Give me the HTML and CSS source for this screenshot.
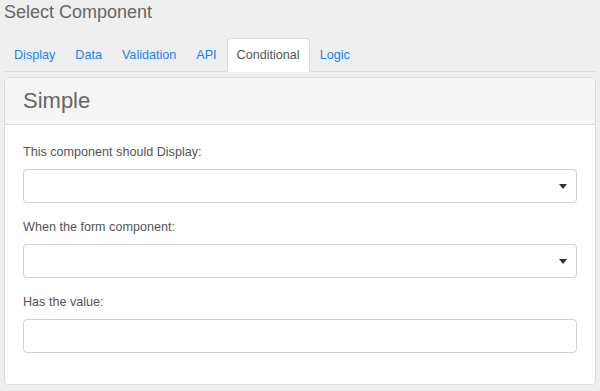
FILE: index.html
```html
<!DOCTYPE html>
<html lang="en">
<head>
  <meta charset="UTF-8">
  <meta name="viewport" content="width=device-width, initial-scale=1.0">
  <title>Select Component</title>
  <link rel="stylesheet" href="styles.css">
</head>
<body>
  <div class="container">
    <h4 class="title">Select Component</h4>

    <ul class="tabs">
      <li class="tab"><a href="#">Display</a></li>
      <li class="tab"><a href="#">Data</a></li>
      <li class="tab"><a href="#">Validation</a></li>
      <li class="tab"><a href="#">API</a></li>
      <li class="tab active"><a href="#">Conditional</a></li>
      <li class="tab"><a href="#">Logic</a></li>
    </ul>

    <div class="card">
      <div class="cardHeader">Simple</div>
      <div class="cardBody">
        <div class="formGroup">
          <label class="label">This component should Display:</label>
          <div class="select"><span class="caret"></span></div>
        </div>
        <div class="formGroup">
          <label class="label">When the form component:</label>
          <div class="select"><span class="caret"></span></div>
        </div>
        <div class="formGroup">
          <label class="label">Has the value:</label>
          <input type="text" class="input">
        </div>
      </div>
    </div>
  </div>
</body>
</html>
```

FILE: styles.css
```css
* {
  box-sizing: border-box;
}

body {
  margin: 0;
  background-color: #efefef;
  font-family: "Liberation Sans", Arial, sans-serif;
  font-size: 12.6px;
  color: #555;
}

.container {
  padding: 2px 4px 0 4px;
}

.title {
  margin: 0 0 16px;
  font-size: 18px;
  font-weight: normal;
  line-height: 20px;
  color: #666;
}

.tabs {
  display: flex;
  list-style: none;
  margin: 0 0 5px;
  padding: 0;
  border-bottom: 1px solid #dcdcdc;
}
.tab {
  margin-bottom: -1px;
}
.tab a {
  display: block;
  padding: 7px 9px;
  line-height: 18px;
  border: 1px solid transparent;
  border-radius: 4px 4px 0 0;
  color: #1683f8;
  text-decoration: none;
}
.tab.active a {
  background-color: #fff;
  border-color: #dcdcdc #dcdcdc #fff;
  color: #555;
}

.card {
  background-color: #fff;
  border: 1px solid #dcdcdc;
  border-radius: 4px;
}
.cardHeader {
  padding: 10px 18px;
  font-size: 22px;
  line-height: 26px;
  color: #666;
  background-color: #f5f5f5;
  border-bottom: 1px solid #dcdcdc;
  border-radius: 4px 4px 0 0;
}
.cardBody {
  padding: 18px 18px 16px;
}

.formGroup {
  margin-bottom: 15px;
}
.label {
  display: block;
  margin-bottom: 8px;
  line-height: 18px;
  color: #555;
}
.select,
.input {
  display: flex;
  align-items: center;
  justify-content: flex-end;
  width: 100%;
  height: 34px;
  padding: 0 9px;
  background-color: #fff;
  border: 1px solid #ccd2d8;
  border-radius: 4px;
  font-family: inherit;
  font-size: 13px;
}
.caret {
  width: 0;
  height: 0;
  border-left: 4px solid transparent;
  border-right: 4px solid transparent;
  border-top: 5px solid #333;
}
```
